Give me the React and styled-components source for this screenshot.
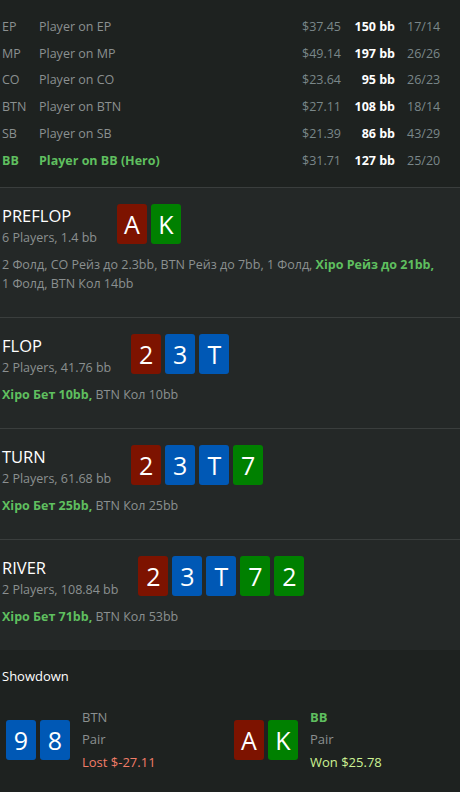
import React from "react";
import styled, { createGlobalStyle } from "styled-components";

const GlobalStyle = createGlobalStyle`
  html, body {
    margin: 0;
    padding: 0;
    background: #1e2220;
  }
  body {
    font-family: "Open Sans", "Noto Sans", sans-serif;
    font-size: 12.5px;
    color: #8b9090;
  }
`;

const players = [
  { pos: "EP", name: "Player on EP", stack: "$37.45", bb: "150 bb", stat: "17/14" },
  { pos: "MP", name: "Player on MP", stack: "$49.14", bb: "197 bb", stat: "26/26" },
  { pos: "CO", name: "Player on CO", stack: "$23.64", bb: "95 bb", stat: "26/23" },
  { pos: "BTN", name: "Player on BTN", stack: "$27.11", bb: "108 bb", stat: "18/14" },
  { pos: "SB", name: "Player on SB", stack: "$21.39", bb: "86 bb", stat: "43/29" },
  { pos: "BB", name: "Player on BB (Hero)", stack: "$31.71", bb: "127 bb", stat: "25/20", hero: true },
];

// non-breaking spaces keep "1 Фолд" together when the line wraps
const streets = [
  {
    title: "PREFLOP",
    sub: "6 Players, 1.4 bb",
    cards: [["A", "red"], ["K", "green"]],
    actions: [
      { text: "2 Фолд, CO Рейз до 2.3bb, BTN Рейз до 7bb, 1 Фолд, " },
      { text: "Хіро Рейз до 21bb,", hero: true },
      { text: " 1\u00a0Фолд, BTN Кол 14bb" },
    ],
  },
  {
    title: "FLOP",
    sub: "2 Players, 41.76 bb",
    cards: [["2", "red"], ["3", "blue"], ["T", "blue"]],
    actions: [{ text: "Хіро Бет 10bb,", hero: true }, { text: " BTN Кол 10bb" }],
  },
  {
    title: "TURN",
    sub: "2 Players, 61.68 bb",
    cards: [["2", "red"], ["3", "blue"], ["T", "blue"], ["7", "green"]],
    actions: [{ text: "Хіро Бет 25bb,", hero: true }, { text: " BTN Кол 25bb" }],
  },
  {
    title: "RIVER",
    sub: "2 Players, 108.84 bb",
    cards: [["2", "red"], ["3", "blue"], ["T", "blue"], ["7", "green"], ["2", "green"]],
    actions: [{ text: "Хіро Бет 71bb,", hero: true }, { text: " BTN Кол 53bb" }],
  },
];

const suitColors = {
  red: "#7d1300",
  green: "#008000",
  blue: "#0058b5",
};

const Page = styled.div`
  min-height: 100vh;
  background: #1e2220;
`;

const PlayerList = styled.div`
  padding: 13px 2px 13px 2px;
`;

const PlayerRow = styled.div`
  display: grid;
  grid-template-columns: 37px 1fr 51px 42px 63px;
  align-items: center;
  height: 26.8px;
  color: ${(p) => (p.$hero ? "#5fbf5f" : "#8b9090")};
  font-weight: ${(p) => (p.$hero ? 700 : 400)};
`;

const Stack = styled.span`
  color: #7a8789;
  font-weight: 400;
`;

const BigBlinds = styled.span`
  color: #ffffff;
  font-weight: 700;
  text-align: right;
  white-space: nowrap;
`;

const Stat = styled.span`
  color: #7a8789;
  font-weight: 400;
  padding-left: 12px;
`;

const Street = styled.section`
  background: #242827;
  border-top: 1px solid #3a3e3d;
  padding: 16px 2px 24px 2px;
`;

const StreetHeader = styled.div`
  display: flex;
  align-items: flex-start;
  gap: 20px;
`;

const StreetInfo = styled.div`
  display: flex;
  flex-direction: column;
`;

const StreetTitle = styled.div`
  color: #ffffff;
  font-size: 16.5px;
  line-height: 24px;
`;

const StreetSub = styled.div`
  color: #8b9090;
  line-height: 20px;
`;

const Cards = styled.div`
  display: flex;
  gap: 4px;
`;

const Card = styled.div`
  width: 30px;
  height: 40px;
  border-radius: 3px;
  background: ${(p) => suitColors[p.$suit]};
  color: #ffffff;
  font-size: 25px;
  display: flex;
  align-items: center;
  justify-content: center;
`;

const Actions = styled.p`
  margin: 7px 0 0 0;
  line-height: 19px;
  color: #8b9090;
`;

const Hero = styled.span`
  color: #5fbf5f;
  font-weight: 700;
`;

const Showdown = styled.section`
  background: #1e2220;
  padding: 16px 2px 18px 2px;
`;

const ShowdownTitle = styled.div`
  color: #ffffff;
  font-size: 13px;
  line-height: 20px;
`;

const ShowdownPlayers = styled.div`
  display: grid;
  grid-template-columns: 1fr 1fr;
  margin-top: 20px;
`;

const ShowdownPlayer = styled.div`
  display: flex;
  align-items: center;
  gap: 12px;
  padding-left: 4px;
`;

const ShowdownInfo = styled.div`
  display: flex;
  flex-direction: column;
  font-size: 13px;
  line-height: 22.5px;
`;

const Who = styled.span`
  color: ${(p) => (p.$hero ? "#5fbf5f" : "#8b9090")};
  font-weight: ${(p) => (p.$hero ? 700 : 400)};
`;

const Result = styled.span`
  color: ${(p) => (p.$won ? "#cdf293" : "#f27d68")};
`;

const showdown = [
  { pos: "BTN", hand: "Pair", cards: [["9", "blue"], ["8", "blue"]], result: "Lost $-27.11" },
  { pos: "BB", hand: "Pair", cards: [["A", "red"], ["K", "green"]], result: "Won $25.78", hero: true },
];

export default function App() {
  return (
    <Page>
      <GlobalStyle />
      <PlayerList>
        {players.map((p) => (
          <PlayerRow key={p.pos} $hero={p.hero}>
            <span>{p.pos}</span>
            <span>{p.name}</span>
            <Stack>{p.stack}</Stack>
            <BigBlinds>{p.bb}</BigBlinds>
            <Stat>{p.stat}</Stat>
          </PlayerRow>
        ))}
      </PlayerList>

      {streets.map((s) => (
        <Street key={s.title}>
          <StreetHeader>
            <StreetInfo>
              <StreetTitle>{s.title}</StreetTitle>
              <StreetSub>{s.sub}</StreetSub>
            </StreetInfo>
            <Cards>
              {s.cards.map(([rank, suit], i) => (
                <Card key={i} $suit={suit}>{rank}</Card>
              ))}
            </Cards>
          </StreetHeader>
          <Actions>
            {s.actions.map((a, i) =>
              a.hero ? <Hero key={i}>{a.text}</Hero> : <span key={i}>{a.text}</span>
            )}
          </Actions>
        </Street>
      ))}

      <Showdown>
        <ShowdownTitle>Showdown</ShowdownTitle>
        <ShowdownPlayers>
          {showdown.map((p) => (
            <ShowdownPlayer key={p.pos}>
              <Cards>
                {p.cards.map(([rank, suit], i) => (
                  <Card key={i} $suit={suit}>{rank}</Card>
                ))}
              </Cards>
              <ShowdownInfo>
                <Who $hero={p.hero}>{p.pos}</Who>
                <span>{p.hand}</span>
                <Result $won={p.hero}>{p.result}</Result>
              </ShowdownInfo>
            </ShowdownPlayer>
          ))}
        </ShowdownPlayers>
      </Showdown>
    </Page>
  );
}
